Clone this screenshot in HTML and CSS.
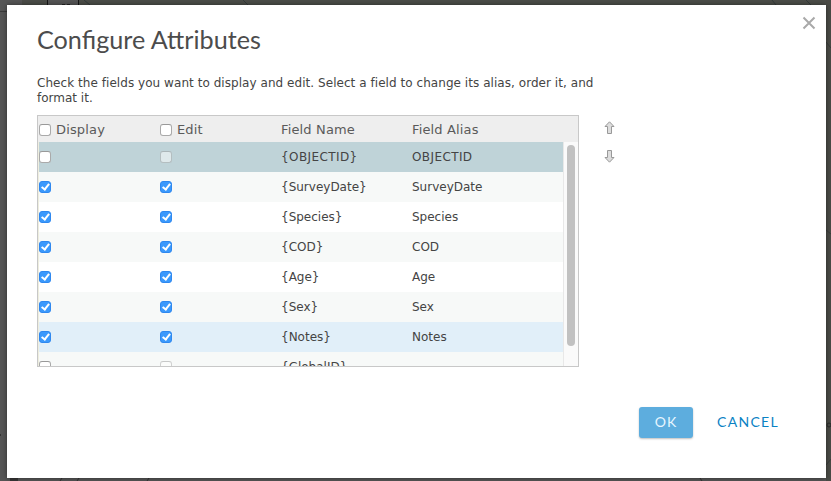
FILE: index.html
```html
<!DOCTYPE html>
<html lang="en">
<head>
<meta charset="utf-8">
<title>Configure Attributes</title>
<link rel="stylesheet" href="styles.css">
</head>
<body>
<svg class="map" width="831" height="481" viewBox="0 0 831 481" aria-hidden="true">
  <path d="M0 11.500H7" stroke="#3a3a3a" fill="none"/>
  <path d="M22 0H48V5H22zM79 0H831V5H79z" fill="#4b4d48"/>
  <path d="M47.500 0V5M78.500 0V5" stroke="#151515"/>
  <path d="M62 4.500h3M67 4.500h3" stroke="#222"/>
  <path d="M84 0l6 5M243 0l5 5M772 0l4 5M806 0l5 5" stroke="#343b3b" fill="none"/>
  <path d="M826 0H831V481H826z" fill="#4a4b46"/>
  <path d="M826 42l5 6M826 465l5-6M826 230l5 4" stroke="#383c3b" fill="none"/>
  <circle cx="829" cy="425" r="2" stroke="#292a2a" fill="none"/>
  <path d="M10 478H18V481H10z" fill="#373535"/>
  <path d="M62 478l-2 3M79 478l-2 3M149 478l-2 3M700 478l2 3" stroke="#343232"/>
  <path d="M0 434h1v2H0z" fill="#333"/>
</svg>
<main class="dialog">
  <button class="close" aria-label="Close"><svg width="14" height="14" viewBox="0 0 14 14"><path d="M1.500 1.500l11 11M12.500 1.500l-11 11"/></svg></button>
  <h1>Configure Attributes</h1>
  <p class="hint"><span class="first">Check the fields you want to display and edit. Select a field to change its alias, order it, and</span><br>format it.</p>
  <div class="editor">
    <div class="grid">
      <div class="head row">
        <label><i class="box"></i><span>Display</span></label><label><i class="box"></i><span>Edit</span></label><span>Field Name</span><span>Field Alias</span>
      </div>
      <div class="body">
        <div class="rows">
          <div class="row selected"><i class="box"></i><i class="box disabled"></i><span>{OBJECTID}</span><span>OBJECTID</span></div>
          <div class="row alt"><i class="box on"></i><i class="box on"></i><span>{SurveyDate}</span><span>SurveyDate</span></div>
          <div class="row"><i class="box on"></i><i class="box on"></i><span>{Species}</span><span>Species</span></div>
          <div class="row alt"><i class="box on"></i><i class="box on"></i><span>{COD}</span><span>COD</span></div>
          <div class="row"><i class="box on"></i><i class="box on"></i><span>{Age}</span><span>Age</span></div>
          <div class="row alt"><i class="box on"></i><i class="box on"></i><span>{Sex}</span><span>Sex</span></div>
          <div class="row hover"><i class="box on"></i><i class="box on"></i><span>{Notes}</span><span>Notes</span></div>
          <div class="row alt"><i class="box"></i><i class="box disabled"></i><span>{GlobalID}</span><span></span></div>
        </div>
        <div class="track"><div class="thumb"></div></div>
      </div>
    </div>
    <div class="order">
      <svg width="11" height="13" viewBox="0 0 11 13"><path d="M5.500 .8L10 5.500H7.500V12.500H3.500V5.500H1z"/></svg>
      <svg width="11" height="13" viewBox="0 0 11 13"><path d="M5.500 12.200L10 7.500H7.500V.5H3.500V7.500H1z"/></svg>
    </div>
  </div>
  <div class="actions"><button class="ok">OK</button><button class="cancel">CANCEL</button></div>
</main>
</body>
</html>
```
FILE: styles.css
```css
*, *::after { box-sizing: border-box; }
body {
  margin: 0;
  width: 831px;
  height: 481px;
  padding: 5px 5px 3px 7px;
  overflow: hidden;
  background: #555;
  color: #444;
  font-family: "DejaVu Sans", sans-serif;
  font-size: 12px;
}
.map { position: absolute; left: 0; top: 0; }
button { border: 0; background: none; padding: 0; font: inherit; }
.dialog {
  position: relative;
  height: 473px;
  padding: 18px 30px 0;
  background: #fff;
  box-shadow: 0 0 5px rgba(0, 0, 0, .45);
}
.close { position: absolute; right: 10px; top: 11px; width: 14px; height: 14px; }
.close svg { display: block; fill: none; stroke: #a9a9a9; stroke-width: 2; }
h1 {
  margin: 0;
  height: 32px;
  font: 400 25.2px/32px Lato, sans-serif;
  color: #4c4c4c;
  white-space: nowrap;
}
.hint { margin: 21px 0 0; height: 39px; line-height: 15px; white-space: nowrap; }
.first { letter-spacing: .05px; }
.editor { display: flex; }
.grid {
  width: 542px;
  height: 252px;
  border: 1px solid #c8c8c8;
  overflow: hidden;
}
.row {
  display: grid;
  grid-template-columns: 121px 121px 131px 1fr;
  align-items: center;
  height: 30px;
  margin-left: 1px;
  background: #fff;
}
.head { height: 26px; margin: 0; padding-left: 1px; background: #eee; font-size: 13px; letter-spacing: .15px; color: #5a5a5a; }
.head label { display: flex; align-items: center; gap: 5px; }
.head .box { margin-top: 2px; }
.body { display: flex; background: #eeeedf; }
.rows { width: 525px; }
.alt { background: #f7f9f8; }
.selected { background: #bfd3d8; letter-spacing: .4px; }
.hover { background: #e1eff9; }
.box {
  display: block;
  width: 12px;
  height: 12px;
  border: 1px solid #aaa;
  border-top-color: #999;
  border-radius: 3px;
  background: #fff;
}
.disabled { opacity: .5; }
.on {
  padding: 0 0 0 3px;
  border-color: #2f88ef;
  background: #3b99fc;
}
.on::after {
  content: "";
  display: block;
  width: 4.5px;
  height: 8px;
  border: solid #fff;
  border-width: 0 2px 2px 0;
  transform: rotate(38deg);
}
.track { width: 15px; padding: 3px 0 0 3px; border-left: 1px solid #e8e8e8; background: #fafafa; }
.thumb { width: 8px; height: 201px; border-radius: 4px; background: #c1c1c1; }
.order { display: flex; flex-direction: column; gap: 16px; padding: 6px 0 0 25px; }
.order svg { display: block; fill: #ddd; stroke: #999; }
.actions { display: flex; align-items: center; height: 31px; margin: 40px 0 0 602px; font: 14px/29px Lato, sans-serif; letter-spacing: 1px; }
.ok { width: 54px; height: 31px; padding-bottom: 2px; border-radius: 3px; background: #5dadde; color: #e8f6ff; box-shadow: 0 1px 2px rgba(0, 0, 0, .25); letter-spacing: 1px; }
.cancel { margin-left: 24px; padding-bottom: 2px; color: #0a82c4; letter-spacing: 1.3px; }
```
